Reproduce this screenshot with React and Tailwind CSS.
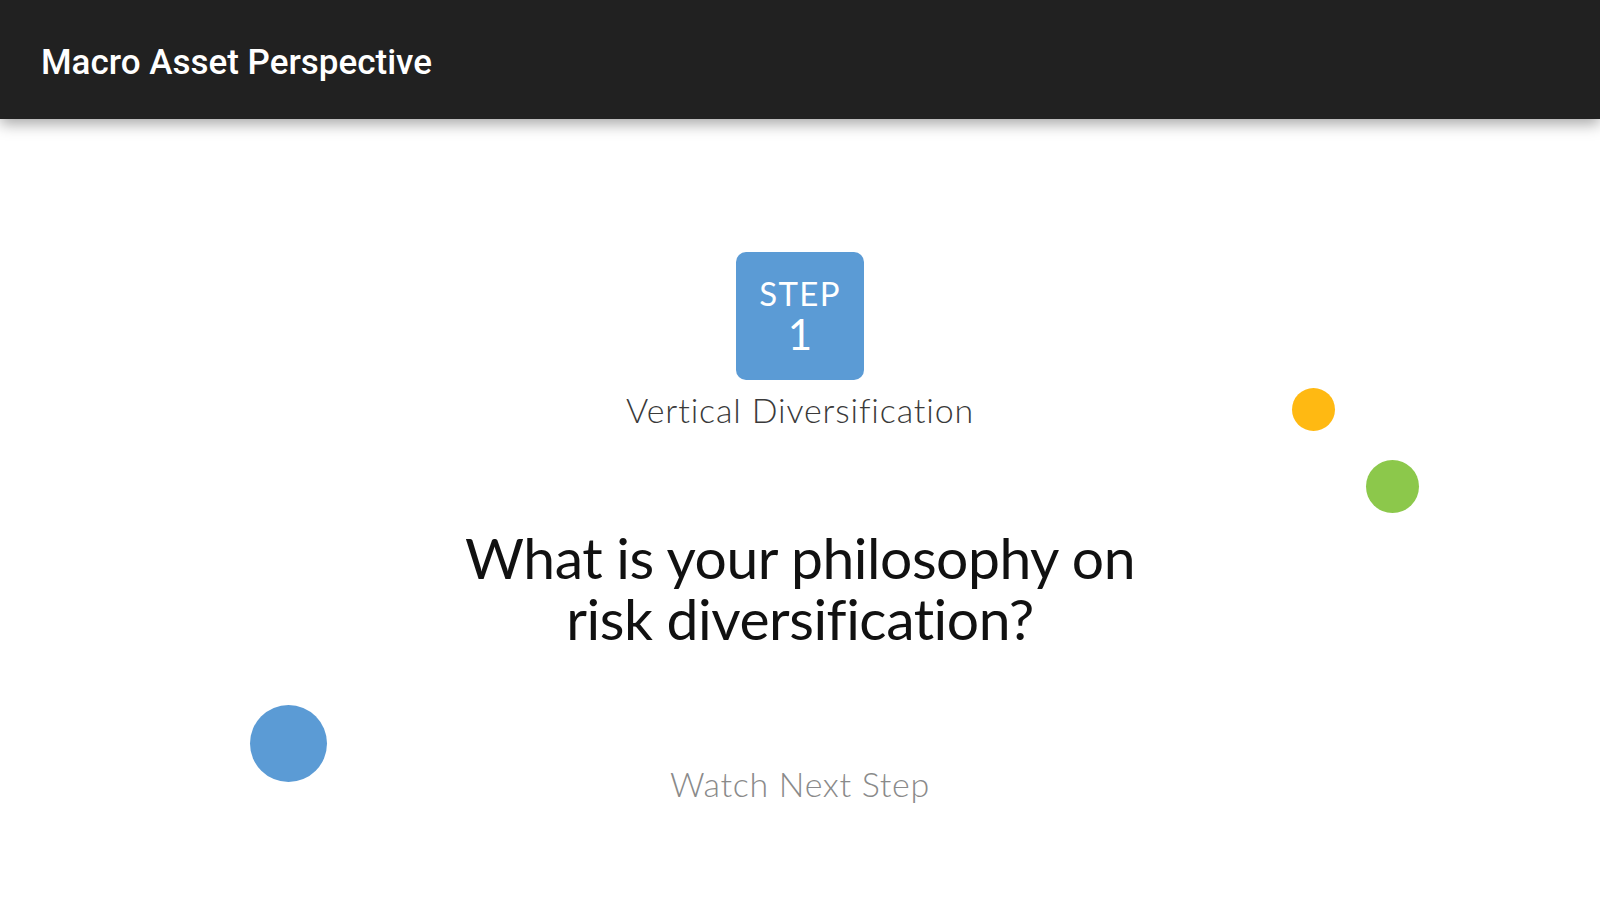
import React from "react";

const Dot = ({ className }) => <div className={`absolute rounded-full ${className}`} />;

const App = () => {
  return (
    <div className="relative min-h-screen w-full overflow-hidden bg-white font-['Lato','Noto_Sans',sans-serif]">
      <header className="relative z-10 flex h-[119px] items-center bg-[#212121] px-[41px] pt-[7px] shadow-[0_5px_14px_rgba(0,0,0,0.35)]">
        <h1 className="font-['Roboto',sans-serif] text-[35px] font-medium text-white">Macro Asset Perspective</h1>
      </header>

      <main className="flex flex-col items-center pt-[133px]">
        <div className="flex h-[128px] w-[128px] flex-col items-center justify-center rounded-[10px] bg-[#5b9bd5] text-white">
          <span className="text-[33px] leading-[36px] tracking-[0.04em]">STEP</span>
          <span className="text-[42px] leading-[46px]">1</span>
        </div>
        <p className="mt-[10px] text-[34px] font-light leading-[40px] tracking-[0.025em] text-[#3a3a3a]">
          Vertical Diversification
        </p>

        <h2 className="mt-[97px] text-center text-[57px] leading-[61px] tracking-[-0.008em] text-[#111]">
          What is your philosophy on
          <br />
          risk diversification?
        </h2>

        <button className="mt-[115px] text-[34px] font-light leading-[40px] tracking-[0.02em] text-[#8a8a8a]">
          Watch Next Step
        </button>
      </main>

      <Dot className="left-[1292px] top-[388px] h-[43px] w-[43px] bg-[#ffb912]" />
      <Dot className="left-[1366px] top-[460px] h-[53px] w-[53px] bg-[#8cc84b]" />
      <Dot className="left-[250px] top-[705px] h-[77px] w-[77px] bg-[#5b9bd5]" />
    </div>
  );
};

export default App;
